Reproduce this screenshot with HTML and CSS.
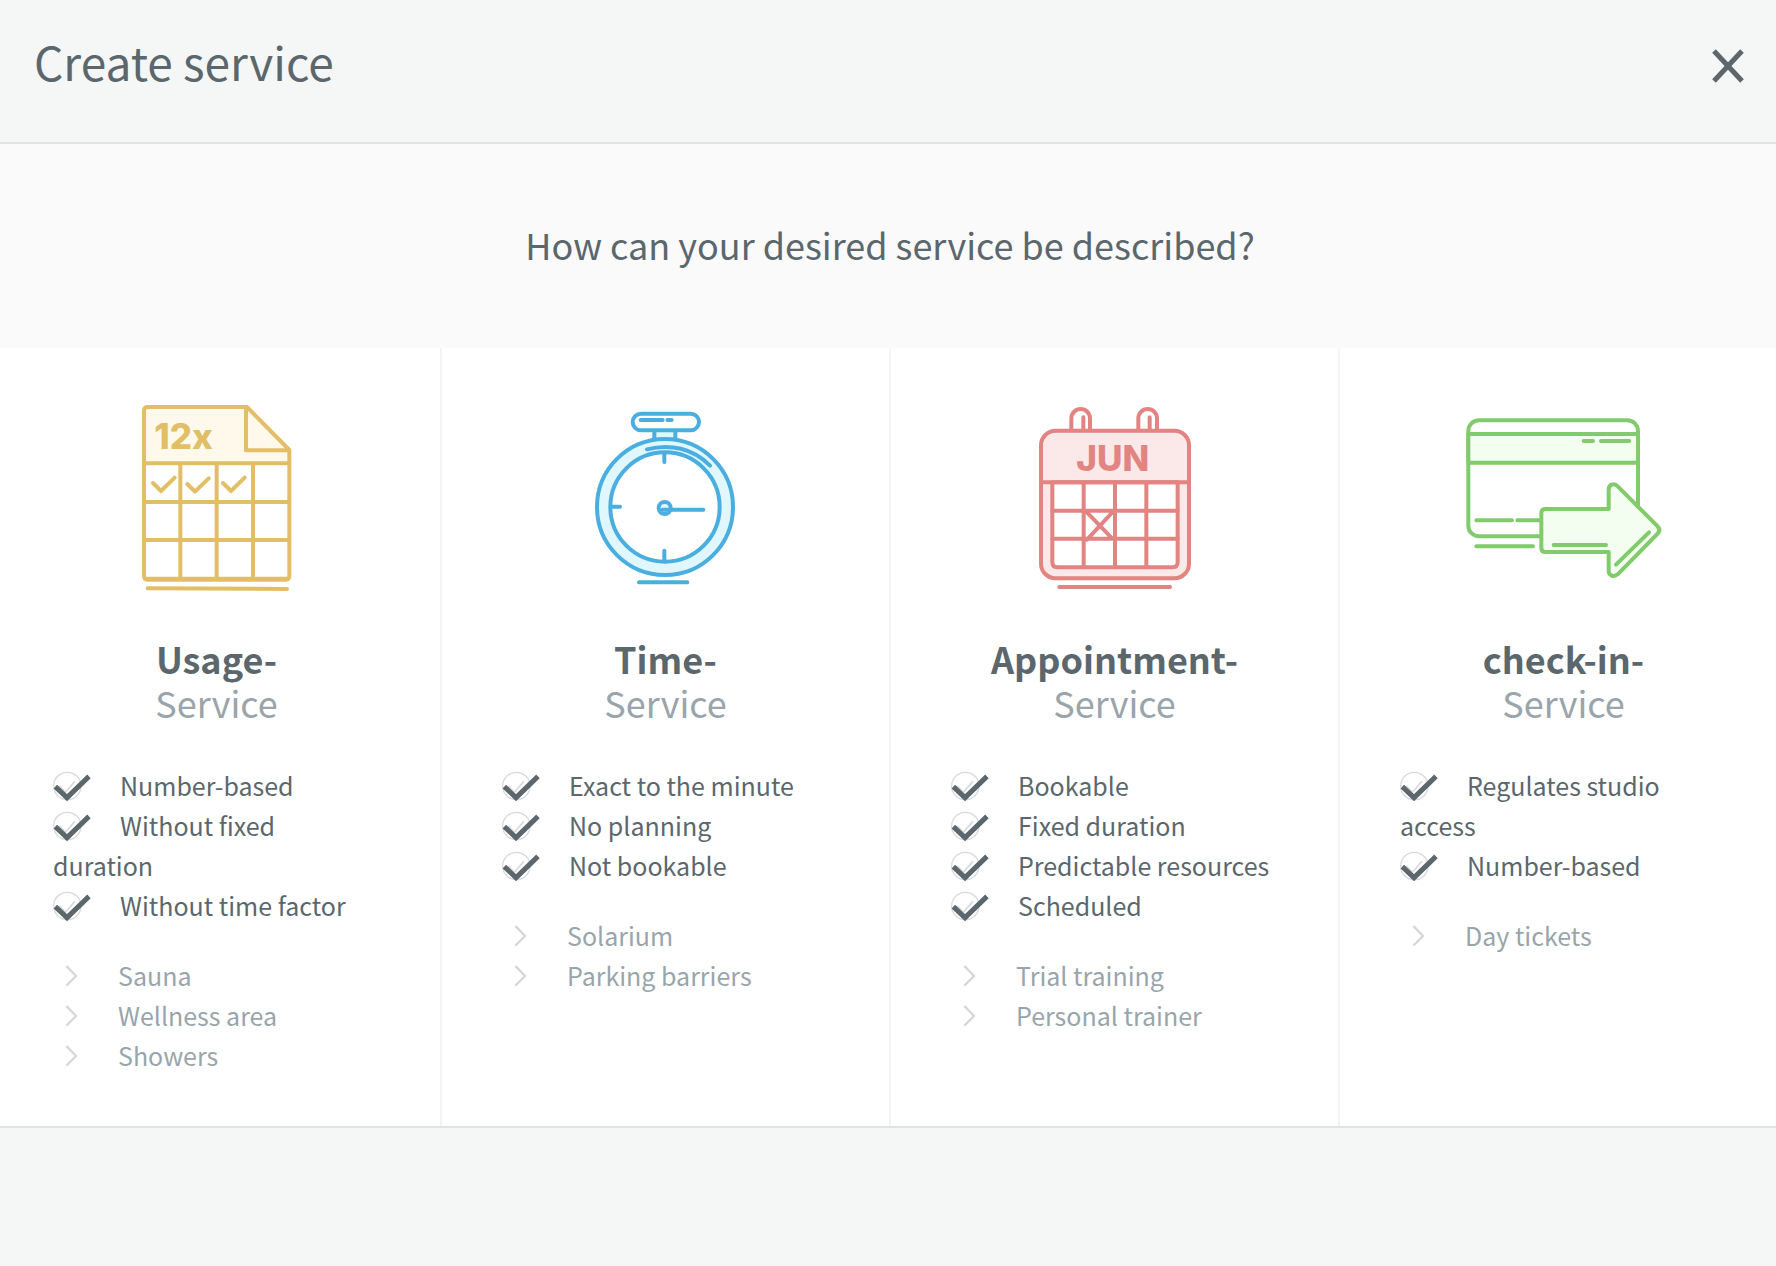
FILE: index.html
```html
<!DOCTYPE html>
<html lang="en">
<head>
<meta charset="utf-8">
<meta name="viewport" content="width=device-width, initial-scale=1">
<title>Create service</title>
<link rel="stylesheet" href="styles.css">
</head>
<body>
<svg class="sprite" aria-hidden="true">
  <symbol id="check" viewBox="38 420 114 96">
    <circle cx="81" cy="468" r="41" fill="none" stroke="#d8dadd" stroke-width="4"/>
    <path d="M58 469 75 487 103 455" fill="none" stroke="#d8dadd" stroke-width="5" stroke-linecap="round"/>
    <path d="M45 470 80 503 146 439" fill="none" stroke="#5b676d" stroke-width="15"/>
  </symbol>
  <symbol id="chevron" viewBox="39 180 114 96">
    <path d="M81 200 108 228 81 255" fill="none" stroke="#d5d7da" stroke-width="7" stroke-linecap="round"/>
  </symbol>
</svg>

<div class="dialog">
  <header class="dialog-header">
    <h1 class="title">Create service</h1>
    <button class="close" type="button" aria-label="Close">
      <svg class="close-icon" viewBox="0 0 32 34"><path d="M2 2 30 32M30 2 2 32" fill="none" stroke="currentColor" stroke-width="5"/></svg>
    </button>
  </header>

  <div class="question">
    <h2 class="question-text">How can your desired service be described?</h2>
  </div>

  <main class="services">
    <section class="service">
      <svg class="picture" viewBox="-71 24 660 600" fill="none" stroke="#e2be67" stroke-width="12" stroke-linecap="round" stroke-linejoin="round" aria-hidden="true">
        <path d="M40 220V60Q40 51 49 51H347L476 181V220Z" fill="#fef9eb" stroke="none"/>
        <path d="M40 558V62Q40 51 51 51H349L476 180V558Q476 569 465 569H51Q40 569 40 558Z"/>
        <path d="M47 566H469M346 53V181H474M40 220H476M40 336H476M40 450H476M149 220V566M258 220V566M367 220V566"/>
        <path d="M51 595 469 597"/>
        <path d="M67 279 91 303 132 263M170 282 193 305 234 265M277 279 301 303 342 263"/>
        <text x="71" y="176" class="picture-text usage-text">12x</text>
      </svg>
      <h3 class="name"><strong class="kind">Usage-</strong> <span class="suffix">Service</span></h3>
      <ul class="list traits">
        <li><svg class="bullet"><use href="#check"/></svg>Number-based</li>
        <li><svg class="bullet"><use href="#check"/></svg>Without fixed duration</li>
        <li><svg class="bullet"><use href="#check"/></svg>Without time factor</li>
      </ul>
      <ul class="list examples">
        <li><svg class="bullet"><use href="#chevron"/></svg>Sauna</li>
        <li><svg class="bullet"><use href="#chevron"/></svg>Wellness area</li>
        <li><svg class="bullet"><use href="#chevron"/></svg>Showers</li>
      </ul>
    </section>

    <section class="service">
      <svg class="picture" viewBox="-72 -6 660 600" fill="none" stroke="#4aafe0" stroke-width="12" stroke-linecap="round" stroke-linejoin="round" aria-hidden="true">
        <path d="M223 90V120H286V90Z" fill="#dff7fd"/>
        <circle cx="255" cy="321" r="204" fill="#dff7fd"/>
        <circle cx="255" cy="321" r="164" fill="#fff"/>
        <rect x="158" y="41" width="199" height="50" rx="25" fill="#fff"/>
        <path d="M182 60H248M262 60H275M201 148C270 130 340 145 390 197M253 158V186M94 320H120M253 452V484"/>
        <circle cx="254" cy="324" r="18" fill="#dff7fd"/>
        <path d="M248 329H370M177 547H322"/>
      </svg>
      <h3 class="name"><strong class="kind">Time-</strong> <span class="suffix">Service</span></h3>
      <ul class="list traits">
        <li><svg class="bullet"><use href="#check"/></svg>Exact to the minute</li>
        <li><svg class="bullet"><use href="#check"/></svg>No planning</li>
        <li><svg class="bullet"><use href="#check"/></svg>Not bookable</li>
      </ul>
      <ul class="list examples">
        <li><svg class="bullet"><use href="#chevron"/></svg>Solarium</li>
        <li><svg class="bullet"><use href="#chevron"/></svg>Parking barriers</li>
      </ul>
    </section>

    <section class="service">
      <svg class="picture" viewBox="-60 9 660 600" fill="none" stroke="#e28481" stroke-width="12" stroke-linecap="round" stroke-linejoin="round" aria-hidden="true">
        <path d="M139 107V70A28 28 0 0 1 195 70V107M340 107V70A28 28 0 0 1 396 70V107" fill="#fff"/>
        <path d="M175 67V104M374 67V104"/>
        <rect x="48" y="107" width="444" height="443" rx="44" fill="#fbe9e9"/>
        <path d="M82 262H458V502Q458 517 443 517H97Q82 517 82 502Z" fill="#fff"/>
        <path d="M48 262H492M82 347H458M82 431H458M176 262V517M270 262V517M364 262V517M186 352 262 431M262 352 186 434M103 576H435"/>
        <text x="154" y="227" class="picture-text appointment-text">JUN</text>
      </svg>
      <h3 class="name"><strong class="kind">Appointment-</strong> <span class="suffix">Service</span></h3>
      <ul class="list traits">
        <li><svg class="bullet"><use href="#check"/></svg>Bookable</li>
        <li><svg class="bullet"><use href="#check"/></svg>Fixed duration</li>
        <li><svg class="bullet"><use href="#check"/></svg>Predictable resources</li>
        <li><svg class="bullet"><use href="#check"/></svg>Scheduled</li>
      </ul>
      <ul class="list examples">
        <li><svg class="bullet"><use href="#chevron"/></svg>Trial training</li>
        <li><svg class="bullet"><use href="#chevron"/></svg>Personal trainer</li>
      </ul>
    </section>

    <section class="service">
      <svg class="picture" viewBox="13 -21 660 600" fill="none" stroke="#81cb6c" stroke-width="12" stroke-linecap="round" stroke-linejoin="round" aria-hidden="true">
        <rect x="56" y="46" width="509" height="348" rx="32" fill="#fff"/>
        <path d="M56 87H565V173H56Z" fill="#f4fef0"/>
        <path d="M402 108H430M454 108H539M80 346H187M203 346H272M80 424H250"/>
        <path d="M287 312H477V254C477 239 492 233 502 242L624 364Q634 375 624 386L504 508C492 518 477 511 477 498V441H287Q275 441 275 429V324Q275 312 287 312Z" fill="#f4fef0"/>
        <path d="M312 420H469M499 479 598 382"/>
      </svg>
      <h3 class="name"><strong class="kind">check-in-</strong> <span class="suffix">Service</span></h3>
      <ul class="list traits">
        <li><svg class="bullet"><use href="#check"/></svg>Regulates studio access</li>
        <li><svg class="bullet"><use href="#check"/></svg>Number-based</li>
      </ul>
      <ul class="list examples">
        <li><svg class="bullet"><use href="#chevron"/></svg>Day tickets</li>
      </ul>
    </section>
  </main>

  <footer class="dialog-footer"></footer>
</div>
</body>
</html>
```

FILE: styles.css
```css
* {
  box-sizing: border-box;
}

body {
  margin: 0;
  color: #5b676d;
  font-family: "Noto Sans CJK SC", "Noto Sans", sans-serif;
}

h1, h2, h3, ul {
  margin: 0;
  padding: 0;
  font-weight: 400;
}

.sprite {
  position: absolute;
  width: 0;
  height: 0;
}

.dialog {
  display: flex;
  flex-direction: column;
  min-height: 100vh;
  overflow: hidden;
  background: #f5f7f7;
}

.dialog-header {
  display: flex;
  align-items: flex-start;
  justify-content: space-between;
  padding: 30px 32px 40px 34px;
  border-bottom: 2px solid #dde4e8;
}

.title {
  font-size: 46px;
  line-height: 62px;
}

.close {
  display: flex;
  align-items: center;
  height: 72px;
  padding: 0;
  border: 0;
  background: none;
  color: #5b676d;
  cursor: pointer;
}

.close-icon {
  width: 32px;
  height: 34px;
}

.question {
  padding: 74px 28px 78px 32px;
  background: #fafafa;
  text-align: center;
}

.question-text {
  font-size: 36px;
  line-height: 52px;
}

.services {
  display: grid;
  grid-template-columns: repeat(4, 1fr);
  margin: 0 -13px 0 -7px;
  background: #fff;
}

.service {
  padding: 50px 0 51px;
  border-right: 2px solid #f3f4f5;
}

.picture {
  display: block;
  width: 220px;
  height: 200px;
  margin: 0 auto 38px;
}

.picture-text {
  stroke: none;
  font-family: Inter, "Liberation Sans", sans-serif;
  font-size: 105px;
}

.usage-text {
  fill: #e2be67;
  font-weight: 800;
}

.appointment-text {
  fill: #e28481;
  font-weight: 800;
}

.name {
  display: flex;
  flex-direction: column;
  margin-bottom: 41px;
  font-size: 36px;
  line-height: 44px;
  text-align: center;
}

.kind {
  font-weight: 700;
}

.suffix {
  color: #99a5ab;
}

.list {
  padding: 0 64px 0 60px;
  font-size: 25px;
  line-height: 40px;
  list-style: none;
}

.bullet {
  width: 38px;
  height: 32px;
  margin-right: 29px;
  vertical-align: -6px;
}

.examples {
  margin-top: 30px;
  color: #99a5ab;
}

.examples .bullet {
  margin-right: 27px;
}

.dialog-footer {
  flex: 1;
  min-height: 138px;
  border-top: 2px solid #dde4e8;
}
```
